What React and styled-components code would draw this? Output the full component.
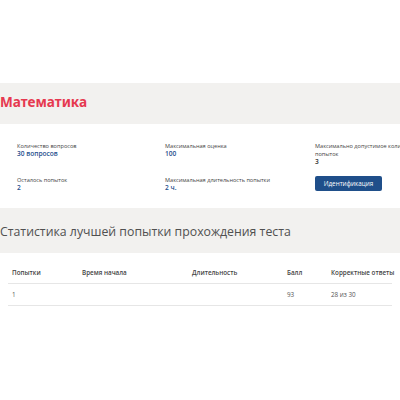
import React from 'react'
import styled, { createGlobalStyle } from 'styled-components';

const GlobalStyle = createGlobalStyle`
    body {
        margin: 0;
        background: #fff;
        font-family: "Open Sans", "Liberation Sans", sans-serif;
        overflow: hidden;
    }
`;

const info = [
    { label: 'Количество вопросов', value: '30 вопросов' },
    { label: 'Максимальная оценка', value: '100' },
    { label: 'Максимально допустимое количество попыток', value: '3', plain: true },
    { label: 'Осталось попыток', value: '2' },
    { label: 'Максимальная длительность попытки', value: '2 ч.' },
];

const columns = ['Попытки', 'Время начала', 'Длительность', 'Балл', 'Корректные ответы'];
const rows = [['1', '', '', '93', '28 из 30']];

export default function App() {
    return (
        <Page>
            <GlobalStyle />
            <Band $height={41}>
                <Title>Математика</Title>
            </Band>

            <InfoGrid>
                {info.map((item) => (
                    <InfoItem key={item.label}>
                        <Label>{item.label}</Label>
                        <Value $plain={item.plain}>{item.value}</Value>
                    </InfoItem>
                ))}
                <InfoItem>
                    <Button>Идентификация</Button>
                </InfoItem>
            </InfoGrid>

            <Band $height={45}>
                <Heading>Статистика лучшей попытки прохождения теста</Heading>
            </Band>

            <Table>
                <thead>
                    <tr>
                        {columns.map((c) => <Th key={c}>{c}</Th>)}
                    </tr>
                </thead>
                <tbody>
                    {rows.map((r, i) => (
                        <tr key={i}>
                            {r.map((cell, j) => <Td key={j}>{cell}</Td>)}
                        </tr>
                    ))}
                </tbody>
            </Table>
        </Page>
    )
}

const Page = styled.div`
    padding-top: 83px;
    width: 400px;
    overflow: hidden;
`;

const Band = styled.div`
    background: #f2f1ef;
    height: ${(p) => p.$height}px;
    display: flex;
    align-items: center;
`;

const Title = styled.h1`
    margin: 0;
    padding-bottom: 4px;
    color: #e63950;
    font-family: "Noto Sans", "Open Sans", sans-serif;
    font-weight: 700;
    font-size: 13.6px;
    line-height: 18px;
`;

const Heading = styled.h2`
    margin: 0;
    padding-top: 2px;
    color: #505050;
    font-weight: 400;
    font-size: 12.3px;
    line-height: 18px;
    white-space: nowrap;
`;

const InfoGrid = styled.div`
    display: grid;
    grid-template-columns: 148px 150px 112px;
    row-gap: 10px;
    padding: 18px 0 16px 17px;
    width: 480px;
`;

const InfoItem = styled.div`
    display: flex;
    flex-direction: column;
    align-items: flex-start;
`;

const Label = styled.div`
    color: #444;
    font-size: 5.6px;
    line-height: 8px;
`;

const Value = styled.div`
    color: ${(p) => (p.$plain ? '#333' : '#1f4f8d')};
    font-size: 6.6px;
    font-weight: 600;
    line-height: 8px;
`;

const Button = styled.button`
    background: #1f4f8a;
    color: #fff;
    border: none;
    border-radius: 2px;
    font-family: inherit;
    font-size: 6.3px;
    font-weight: 400;
    width: 67px;
    height: 15px;
    padding: 0;
    cursor: pointer;
`;

const Table = styled.table`
    margin: 9px 8px 0;
    width: 384px;
    border-collapse: collapse;
    table-layout: fixed;
    font-size: 6.3px;
    color: #555;

    th:nth-child(1) { width: 62px; }
    th:nth-child(2) { width: 102px; }
    th:nth-child(3) { width: 87px; }
    th:nth-child(4) { width: 36px; }
`;

const Th = styled.th`
    text-align: left;
    font-weight: 600;
    color: #444;
    padding: 0 4px;
    height: 21px;
    border-bottom: 1px solid #e6e6e6;
    white-space: nowrap;
`;

const Td = styled.td`
    padding: 0 4px;
    height: 21px;
    color: #555;
    border-bottom: 1px solid #e6e6e6;
    white-space: nowrap;
`;
